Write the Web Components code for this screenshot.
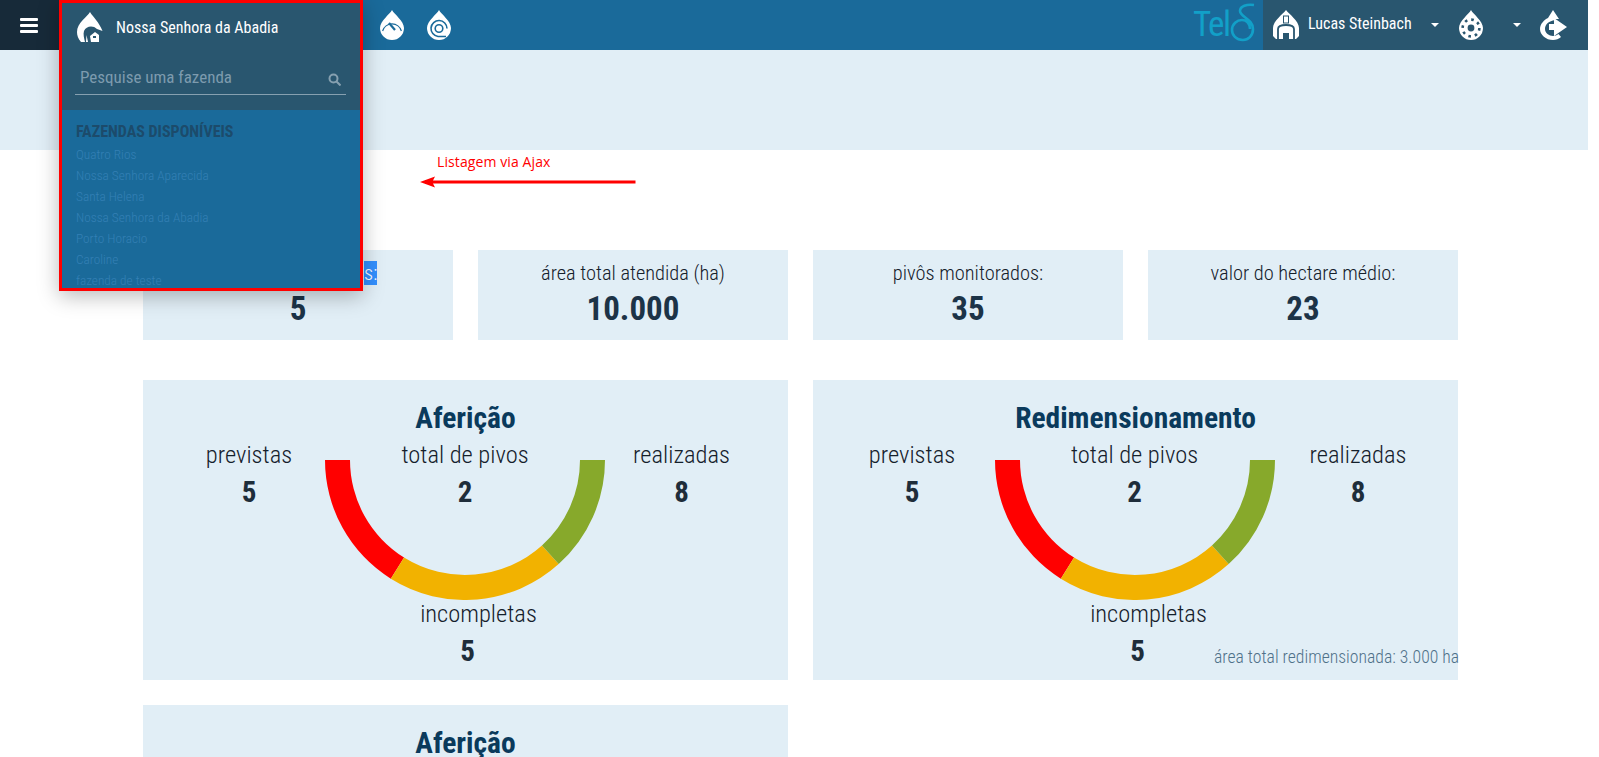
<!DOCTYPE html>
<html lang="pt-BR">
<head>
<meta charset="utf-8">
<title>Telos</title>
<style>
    html, body { margin: 0; height: 757px; overflow: hidden; background: #fff; }
    body { font-family: "Roboto Condensed", "Liberation Sans Narrow", Roboto, sans-serif; font-stretch: 75%; color: #1e2d3a; }
    dash-board { width: 1588px; }
</style>
</head>
<body>
<dash-board>
    <top-bar></top-bar>
    <page-band></page-band>
    <ajax-note></ajax-note>
    <div class="content" style="display:block;padding:100px 130px 0 143px">
        <div style="display:grid;grid-template-columns:repeat(4,1fr);gap:25px;margin-bottom:40px">
            <stat-card><span slot="label">fazendas atendida<mark style="background:#3390ff;color:#fff">s:</mark></span><span slot="value">5</span></stat-card>
            <stat-card><span slot="label">área total atendida (ha)</span><span slot="value">10.000</span></stat-card>
            <stat-card><span slot="label">pivôs monitorados:</span><span slot="value">35</span></stat-card>
            <stat-card><span slot="label">valor do hectare médio:</span><span slot="value">23</span></stat-card>
        </div>
        <div style="display:grid;grid-template-columns:repeat(2,1fr);gap:25px">
            <gauge-panel heading="Aferição" columns="212px 220px 213px"></gauge-panel>
            <gauge-panel heading="Redimensionamento" columns="198px 247px 200px"><span slot="note">área total redimensionada: 3.000 ha</span></gauge-panel>
            <gauge-panel heading="Aferição" columns="212px 220px 213px"></gauge-panel>
        </div>
    </div>
</dash-board>

<script>
const DROP = 'M12 0C14 4 24 11 24 18A12 12 0 0 1 0 18C0 11 10 4 12 0Z';

class DashBoard extends HTMLElement {
    constructor() {
        super();
        this.attachShadow({ mode: 'open' }).innerHTML = `
            <style>
                :host { display: block; position: relative; height: 757px; overflow: hidden; }
            </style>
            <slot></slot>
        `;
    }
}

class DropIcon extends HTMLElement {
    constructor() {
        super();
        this.attachShadow({ mode: 'open' });
    }

    connectedCallback() {
        const c = this.getAttribute('cut') || '#1a6a9a';
        const kinds = {
            gauge: { w: 24, art: `<path d="${DROP}" fill="#fff"/>
                    <path d="M2.6 21A9.8 9.8 0 0 1 21.4 21" fill="none" stroke="${c}" stroke-width="1.2"/>
                    <path d="M9 13L15 20" stroke="${c}" stroke-width="2.2"/>` },
            reel: { w: 24, art: `<path d="${DROP}" fill="#fff"/>
                   <path d="M19 26.5H11A8 8 0 1 1 20 18.5" fill="none" stroke="${c}" stroke-width="1.6"/>
                   <circle cx="12" cy="18.5" r="3.8" fill="none" stroke="${c}" stroke-width="1.6"/>` },
            gear: { w: 24, art: `<path d="${DROP}" fill="#fff"/>
                   <circle cx="12" cy="18" r="8.4" fill="none" stroke="${c}" stroke-width="2.6" stroke-dasharray="2.6 3.99"/>
                   <circle cx="12" cy="18" r="3.4" fill="${c}"/>` },
            farm: { w: 26, art: `<path d="M13 0C16 5 22 10 25.5 19L20 17C16 13 9 14 7 19C6 22 7 26 8 30H4C1 27 0 23 0 20C0 11 10 5 13 0Z" fill="#fff"/>
                   <path d="M9.5 23L11 30H9Z" fill="#fff"/>
                   <path d="M13 24L18 20L22 23V30H14Z" fill="#fff"/>
                   <rect x="16" y="24" width="3" height="2" fill="${c}"/>` },
            home: { w: 26, art: `<path d="M13 0C16 4 26 11 26 18V26L23 29H16V23H10V29H3L0 26V18C0 11 10 4 13 0Z" fill="#fff"/>
                   <path d="M5 29V19C5 16 9 15 13 15C17 15 21 16 21 19V29" fill="none" stroke="${c}" stroke-width="1.8"/>
                   <rect x="10.5" y="6" width="5" height="7" fill="none" stroke="${c}" stroke-width="1"/>` },
        };
        const kind = kinds[this.getAttribute('kind')];
        this.shadowRoot.innerHTML = `
            <style>
                :host { display: block; line-height: 0; }
                svg { display: block; }
            </style>
            <svg width="${kind.w}" height="30" viewBox="0 0 ${kind.w} 30">${kind.art}</svg>
        `;
    }
}

class TopBar extends HTMLElement {
    constructor() {
        super();
        this.attachShadow({ mode: 'open' }).innerHTML = `
            <style>
                :host { display: flex; height: 50px; background: #1a6a9a; position: relative; z-index: 5; }
                .burger { width: 59px; background: #172a39; display: flex; flex-direction: column; gap: 3px; padding-left: 20px; justify-content: center; box-sizing: border-box; }
                .burger i { display: block; width: 18px; height: 3px; background: #fff; border-radius: 1px; }
                .farm { width: 304px; position: relative; }
                .tools { display: flex; gap: 23px; align-items: center; padding-left: 17px; }
                .space { flex: 1; }
                .logo { display: flex; align-items: center; width: 70px; height: 50px; color: #12a0c8; font-size: 35px; font-weight: 400; letter-spacing: -1.5px; box-sizing: border-box; }
                .logo span { display: block; line-height: 50px; width: 36px; }
                .logo svg { margin-top: -4px; }
                .user { width: 325px; background: #29566f; color: #fff; display: flex; align-items: center; box-sizing: border-box; padding-left: 10px; }
                .name { font-size: 16px; font-weight: 400; margin: -4px 0 0 9px; width: 123px; white-space: nowrap; }
                .caret { width: 0; height: 0; border: 4px solid transparent; border-top-color: #fff; border-bottom: 0; }
                .ml1 { margin-left: 20px; }
                .ml2 { margin-left: 30px; }
                .logout { margin-left: 19px; }
            </style>
            <div class="burger"><i></i><i></i><i></i></div>
            <div class="farm"><farm-menu></farm-menu></div>
            <div class="tools">
                <drop-icon kind="gauge"></drop-icon>
                <drop-icon kind="reel"></drop-icon>
            </div>
            <div class="space"></div>
            <div class="logo">
                <span>Tel</span>
                <svg width="28" height="40" viewBox="0 0 28 40" fill="none" stroke="#12a0c8" stroke-width="2.6">
                    <path d="M25 2C18 1 11 3 11 8C11 14 24 16 24 26C24 33 19 37 14 37C7 37 3 32 3 27C3 21 8 17 13 17C18 17 21 21 21 26"/>
                </svg>
            </div>
            <div class="user">
                <drop-icon kind="home" cut="#29566f"></drop-icon>
                <span class="name">Lucas Steinbach</span>
                <span class="caret"></span>
                <drop-icon class="ml1" kind="gear" cut="#29566f"></drop-icon>
                <span class="caret ml2"></span>
                <svg class="logout" width="27" height="30" viewBox="0 0 27 30">
                    <path d="M13 0L19 9H15V10C9 11 5 14 5 19C5 23 9 26 13 26C15 26 17 25 18.5 24L21 27C19 29 16 30 13 30C6 30 0 25 0 19C0 14 4 10 8 8L13 0Z" fill="#fff"/>
                    <path d="M14 8V14H9V20H14V26L27 17Z" fill="#fff"/>
                </svg>
            </div>
        `;
    }
}

class FarmMenu extends HTMLElement {
    constructor() {
        super();
        const farms = ['Quatro Rios', 'Nossa Senhora Aparecida', 'Santa Helena', 'Nossa Senhora da Abadia', 'Porto Horacio', 'Caroline', 'fazenda de teste'];
        this.attachShadow({ mode: 'open' }).innerHTML = `
            <style>
                :host { display: block; position: absolute; left: 0; top: 0; width: 304px; height: 291px; box-sizing: border-box; border: 3px solid #f00; background: #1a6a9a; box-shadow: 0 5px 20px rgba(0,0,0,.28); overflow: hidden; }
                .head { height: 107px; background: #29566f; box-sizing: border-box; }
                .current { display: flex; align-items: center; height: 47px; padding-left: 15px; color: #fff; font-size: 16px; font-weight: 400; }
                .current span { margin: 1px 0 0 13px; }
                .search { display: flex; justify-content: space-between; align-items: center; margin: 9px 14px 0 13px; height: 35px; border-bottom: 1px solid #86a0b0; color: #7d9bae; font-size: 17px; padding: 0 5px; }
                .search svg { margin-top: 5px; }
                .list { padding: 11px 14px; }
                h4 { margin: 0 0 1px; font-size: 16px; line-height: 22px; font-weight: 700; color: #1c4b6b; }
                div.f { font-size: 13.3px; font-weight: 300; line-height: 21px; color: #3480b5; white-space: nowrap; }
            </style>
            <div class="head">
                <div class="current"><drop-icon kind="farm" cut="#29566f"></drop-icon><span>Nossa Senhora da Abadia</span></div>
                <div class="search">
                    <span>Pesquise uma fazenda</span>
                    <svg width="13" height="13" viewBox="0 0 13 13" fill="none" stroke="#86a0b0" stroke-width="2"><circle cx="5.5" cy="5.5" r="4"/><path d="M8.5 8.5L12.5 12.5"/></svg>
                </div>
            </div>
            <div class="list">
                <h4>FAZENDAS DISPONÍVEIS</h4>
                ${farms.map((farm) => `<div class="f">${farm}</div>`).join('')}
            </div>
        `;
    }
}

class PageBand extends HTMLElement {
    constructor() {
        super();
        this.attachShadow({ mode: 'open' }).innerHTML = `
            <style>:host { display: block; height: 100px; background: #e1eef6; }</style>
        `;
    }
}

class AjaxNote extends HTMLElement {
    constructor() {
        super();
        this.attachShadow({ mode: 'open' }).innerHTML = `
            <style>
                :host { display: block; position: absolute; left: 420px; top: 153px; z-index: 2; color: #f00; font: 14px "Open Sans", sans-serif; font-stretch: 100%; }
                span { display: block; margin-left: 17px; line-height: 18px; letter-spacing: .1px; }
                svg { display: block; margin-top: 5px; }
            </style>
            <span>Listagem via Ajax</span>
            <svg width="216" height="12" viewBox="0 0 216 12"><path d="M0 6L15 0.5L13 4.6H215.5V7.4H13L15 11.5Z" fill="#f00"/></svg>
        `;
    }
}

class StatCard extends HTMLElement {
    constructor() {
        super();
        this.attachShadow({ mode: 'open' }).innerHTML = `
            <style>
                :host { display: block; height: 90px; background: #e1eef6; text-align: center; box-sizing: border-box; padding-top: 9px; }
                .label { font-size: 20.4px; font-weight: 300; line-height: 28px; color: #14202b; }
                .value { font-size: 33px; line-height: 44px; font-weight: 700; color: #1c3347; }
            </style>
            <div class="label"><slot name="label"></slot></div>
            <div class="value"><slot name="value"></slot></div>
        `;
    }
}

class GaugeArc extends HTMLElement {
    constructor() {
        super();
        const pt = (r, a) => {
            const rad = a * Math.PI / 180;
            return `${(140 - r * Math.cos(rad)).toFixed(2)} ${(r * Math.sin(rad)).toFixed(2)}`;
        };
        const seg = (from, to, color) => `<path fill="${color}" d="M${pt(140, from)}A140 140 0 0 0 ${pt(140, to)}L${pt(115, to)}A115 115 0 0 1 ${pt(115, from)}Z"/>`;
        this.attachShadow({ mode: 'open' }).innerHTML = `
            <style>:host { display: block; position: absolute; left: 50%; top: 20px; margin-left: -140px; width: 280px; height: 140px; }</style>
            <svg width="280" height="140" viewBox="0 0 280 140">
                ${seg(0, 58, '#ff0000')}
                ${seg(58, 132, '#f2b200')}
                ${seg(132, 180, '#87a92b')}
            </svg>
        `;
    }
}

class GaugePanel extends HTMLElement {
    constructor() {
        super();
        this.attachShadow({ mode: 'open' });
    }

    connectedCallback() {
        this.shadowRoot.innerHTML = `
            <style>
                :host { display: block; height: 300px; background: #e1eef6; position: relative; box-sizing: border-box; padding-top: 20px; text-align: center; }
                h2 { margin: 0 0 4px; font-size: 29.5px; line-height: 36px; font-weight: 700; color: #0a3a5c; }
                .row { display: grid; grid-template-columns: ${this.getAttribute('columns')}; height: 159px; }
                .mid { position: relative; }
                .label { font-size: 24.5px; line-height: 30px; color: #14202b; font-weight: 300; }
                .value { font-size: 29px; line-height: 44px; font-weight: 700; color: #1e2d3a; position: relative; }
                .low .label { padding-left: 26px; }
                .low .value { padding-left: 4px; }
                .note { position: absolute; left: 401px; top: 266px; white-space: nowrap; font-size: 17.65px; font-weight: 300; line-height: 22px; color: #4f7189; }
            </style>
            <h2>${this.getAttribute('heading')}</h2>
            <div class="row">
                <div><div class="label">previstas</div><div class="value">5</div></div>
                <div class="mid"><gauge-arc></gauge-arc><div class="label">total de pivos</div><div class="value">2</div></div>
                <div><div class="label">realizadas</div><div class="value">8</div></div>
            </div>
            <div class="low"><div class="label">incompletas</div><div class="value">5</div></div>
            <div class="note"><slot name="note"></slot></div>
        `;
    }
}

customElements.define('drop-icon', DropIcon);
customElements.define('farm-menu', FarmMenu);
customElements.define('top-bar', TopBar);
customElements.define('page-band', PageBand);
customElements.define('ajax-note', AjaxNote);
customElements.define('stat-card', StatCard);
customElements.define('gauge-arc', GaugeArc);
customElements.define('gauge-panel', GaugePanel);
customElements.define('dash-board', DashBoard);
</script>
</body>
</html>
